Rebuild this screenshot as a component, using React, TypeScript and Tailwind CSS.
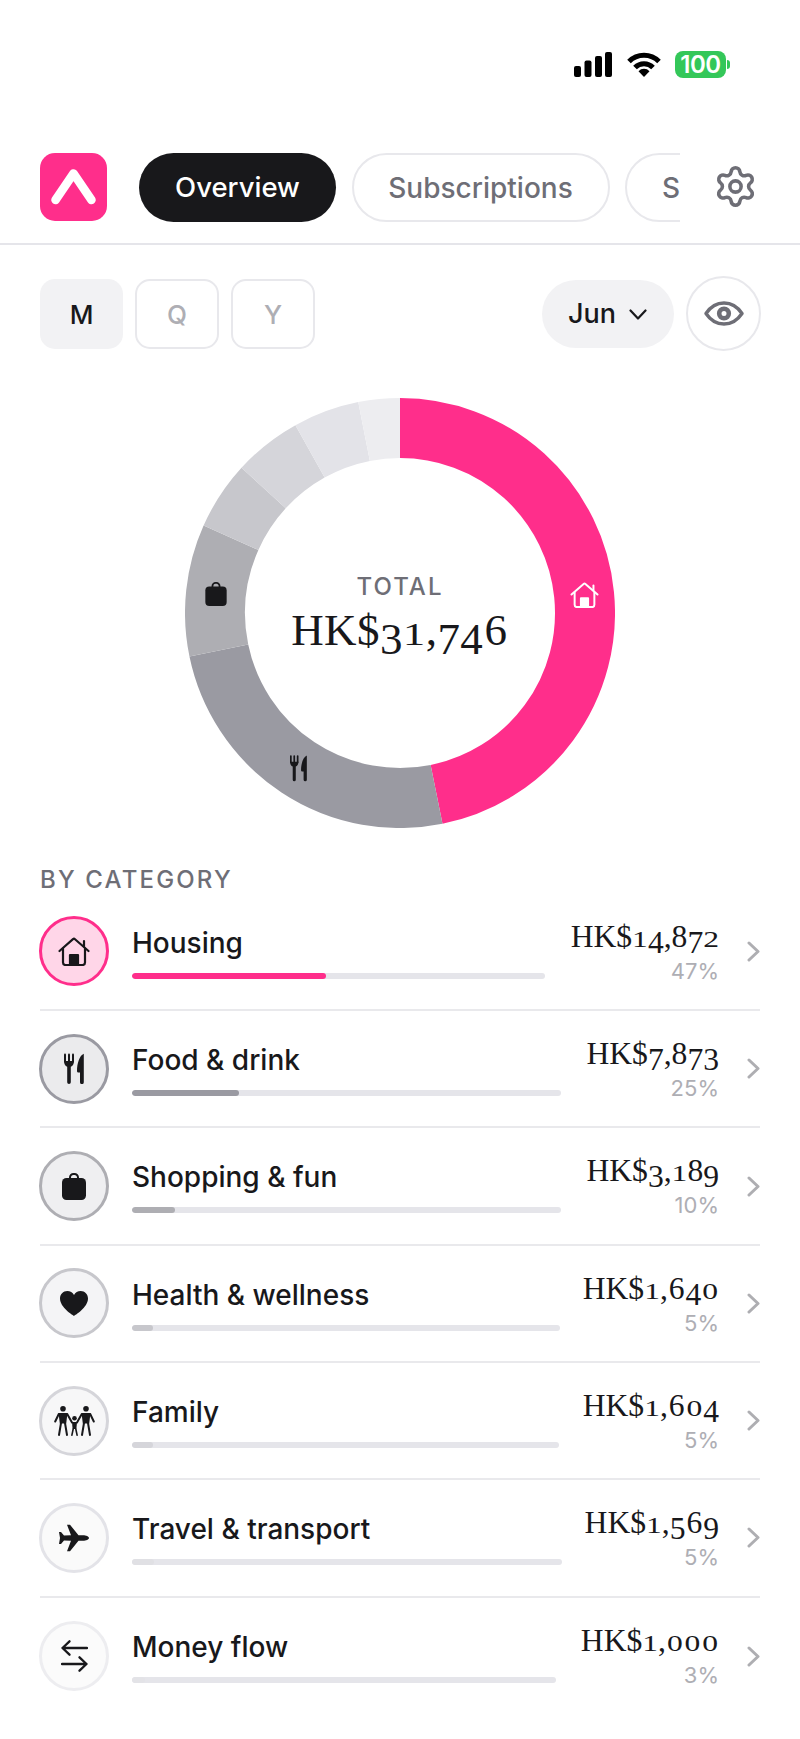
import { Settings } from 'lucide-react';
import type { ReactNode } from 'react';

const SERIF = "font-['Liberation_Serif',serif]";

// fake Georgia's old-style figures: low digits squashed, descending digits dropped
const Figures = ({ text }: { text: string }) => (
  <>
    {text.split('').map((c, i) => {
      if (c === '0') {
        return <span key={i} className="inline-block mx-[0.03em] scale-y-[0.72] origin-[50%_76%]">{c}</span>;
      }
      if ('12'.includes(c)) {
        return <span key={i} className="inline-block scale-y-[0.72] origin-[50%_76%]">{c}</span>;
      }
      if ('34579'.includes(c)) {
        return <span key={i} className="inline-block translate-y-[0.2em]">{c}</span>;
      }
      if (c === '6') {
        return <span key={i} className="mx-[0.03em]">{c}</span>;
      }
      return <span key={i}>{c}</span>;
    })}
  </>
);

const HouseIcon = ({ className }: { className: string }) => (
  <svg className={className} viewBox="0 0 32 29" fill="none" stroke="currentColor" strokeWidth="2.2" strokeLinecap="round" strokeLinejoin="round">
    <path d="M1.5 14 15 2.2a1.5 1.5 0 0 1 2 0L30.5 14" />
    <path d="M26 9.5V4" />
    <path d="M5 11.5v14a2.5 2.5 0 0 0 2.5 2.5h17a2.5 2.5 0 0 0 2.5-2.5v-14" />
    <path d="M12 28V18h8v10z" fill="currentColor" />
  </svg>
);

const ForkKnifeIcon = ({ className }: { className: string }) => (
  <svg className={className} viewBox="0 0 20 31" fill="currentColor">
    <rect x="0" y="0.5" width="2" height="9" rx="1" />
    <rect x="4" y="0.5" width="2" height="9" rx="1" />
    <rect x="8" y="0.5" width="2" height="9" rx="1" />
    <path d="M0 8h10c0 3-1.300 5-3.200 5.800V29.200a1.800 1.800 0 0 1-3.600 0V13.800C1.300 13 0 11 0 8z" />
    <path d="M19.800.8C15.500 2.500 13 10.500 13 18c0 1 .7 1.600 1.700 1.600h1.300v9.600a1.900 1.900 0 0 0 3.800 0z" />
  </svg>
);

const BagIcon = ({ className }: { className: string }) => (
  <svg className={className} viewBox="0 0 24 27" fill="currentColor">
    <path d="M8 5.500V4.500a3.500 3.500 0 0 1 3.500-3.500h1A3.500 3.500 0 0 1 16 4.500v1" fill="none" stroke="currentColor" strokeWidth="2" />
    <rect x="0" y="5" width="24" height="22" rx="4.500" />
  </svg>
);

const HeartIcon = ({ className }: { className: string }) => (
  <svg className={className} viewBox="0 0 28 25" fill="currentColor">
    <path d="M14 25C12.800 24.300 0 16.500 0 7.600 0 3.200 3.200 0 7.300 0 10.200 0 12.700 1.600 14 4 15.300 1.600 17.800 0 20.700 0 24.800 0 28 3.200 28 7.600 28 16.500 15.200 24.300 14 25z" />
  </svg>
);

const FamilyIcon = ({ className }: { className: string }) => (
  <svg className={className} viewBox="0 0 41 30" fill="currentColor" stroke="currentColor" strokeLinecap="round" strokeLinejoin="round">
    <g stroke="none">
      <circle cx="9" cy="2.800" r="2.800" />
      <circle cx="32" cy="2.800" r="2.800" />
      <circle cx="20.500" cy="12.300" r="2.300" />
      <path d="M4.500 7h9l-1.300 10.500H5.800z" />
      <path d="M27.500 7h9l-1.300 10.500h-6.400z" />
      <path d="M18 16h5l-.6 7h-3.800z" />
    </g>
    <g strokeWidth="2" fill="none">
      <path d="M4.800 8 1.200 15.500M13.200 8l4.800 8.500M7 17l-2 12M11 17l2 12" />
      <path d="M36.200 8l3.600 7.500M27.800 8 23 16.500M34 17l2 12M30 17l-2 12" />
      <path strokeWidth="1.600" d="M19.200 23l-1.300 6.200M21.800 23l1.300 6.200" />
    </g>
  </svg>
);

const PlaneIcon = ({ className }: { className: string }) => (
  <svg className={className} viewBox="0 0 30 28" fill="currentColor">
    <path d="M30 14C30 12.500 27 11.300 24 11.300L19.500 11.300 11 .8 8 .8 12 11.300 5 11.500 2 8 0 8 1 14 0 20 2 20 5 16.500 12 16.700 8 27.200 11 27.200 19.500 16.700 24 16.700C27 16.700 30 15.500 30 14Z" />
  </svg>
);

const ArrowsIcon = ({ className }: { className: string }) => (
  <svg className={className} viewBox="0 0 27 32" fill="none" stroke="currentColor" strokeWidth="2.300" strokeLinecap="round" strokeLinejoin="round">
    <path d="M26 8H1.500M8.500 1.300 1.500 8l7 6.700" />
    <path d="M1 24h24.500M18.500 17.300 25.500 24l-7 6.700" />
  </svg>
);

const LogoMark = () => (
  <svg className="w-[45px] h-[36px]" viewBox="0 0 45 36" fill="none" stroke="white" strokeWidth="8.500" strokeLinecap="round" strokeLinejoin="round">
    <path d="M4.500 31 22.500 4.500 40.500 31" />
  </svg>
);

const StatusIcons = () => (
  <div className="flex items-start">
    <svg className="w-[38px] h-[25px]" viewBox="0 0 38 25" fill="black">
      <rect x="0" y="14" width="7" height="11" rx="2" />
      <rect x="10.500" y="8.500" width="7" height="16.500" rx="2" />
      <rect x="21" y="4" width="7" height="21" rx="2" />
      <rect x="31" y="0" width="7" height="25" rx="2" />
    </svg>
    <svg className="w-[34px] h-[25px] ml-[15px]" viewBox="0 0 34 25" fill="none" stroke="black" strokeWidth="5">
      <path d="M2 9.500a21 21 0 0 1 30 0" />
      <path d="M8 15.500a12.500 12.500 0 0 1 18 0" />
      <path d="M17 25l-5.500-5.800a7.500 7.500 0 0 1 11 0z" fill="black" stroke="none" />
    </svg>
    <div className="ml-[14px] -mt-px w-[51px] h-[27px] rounded-[8px] bg-[#34c759] flex items-center justify-center text-white text-[24px] tracking-[-0.5px] font-semibold leading-none">100</div>
    <div className="w-[3px] h-[9px] ml-[1px] mt-[8px] rounded-r-full bg-[#34c759]" />
  </div>
);

// donut slices, angles read clockwise from 12 o'clock
const slices = [
  { from: 0, to: 168.6, color: '#ff2e8b' },
  { from: 168.6, to: 258.3, color: '#9a9aa2' },
  { from: 258.3, to: 294, color: '#aeaeb3' },
  { from: 294, to: 312.5, color: '#c7c7cc' },
  { from: 312.5, to: 330.9, color: '#d5d5da' },
  { from: 330.9, to: 348.8, color: '#e3e3e8' },
  { from: 348.8, to: 360, color: '#ededf0' },
];

const arc = (from: number, to: number) => {
  const R = 185;
  const pt = (a: number) => {
    const r = ((a - 90) * Math.PI) / 180;
    return `${215 + R * Math.cos(r)} ${215 + R * Math.sin(r)}`;
  };
  return `M${pt(from)}A${R} ${R} 0 ${to - from > 180 ? 1 : 0} 1 ${pt(to)}`;
};

const Donut = () => (
  <div className="relative w-[430px] h-[430px] mx-auto mt-[47px]">
    <svg className="w-full h-full" viewBox="0 0 430 430" fill="none">
      {slices.map((s) => (
        <path key={s.from} d={arc(s.from, s.to)} stroke={s.color} strokeWidth="60" />
      ))}
    </svg>
    <HouseIcon className="absolute left-[385px] top-[184px] w-[29px] h-[26px] text-white" />
    <BagIcon className="absolute left-[20px] top-[184px] w-[22px] h-[24px] text-[#18181b]" />
    <ForkKnifeIcon className="absolute left-[105px] top-[356px] w-[17px] h-[28px] text-[#18181b]" />
    <div className="absolute inset-0 flex flex-col items-center">
      <div className="mt-[176px] text-[24px] leading-[26px] font-[550] tracking-[0.085em] text-[#6e6e76]">TOTAL</div>
      <div className={`${SERIF} mt-[4px] text-[45px] leading-[52px] text-[#18181b] tracking-[0.4px]`}>
        HK$<Figures text="31,746" />
      </div>
    </div>
  </div>
);

type Row = {
  name: string;
  amount: string;
  amountW: string;
  pct: number;
  bar: string;
  circle: string;
  icon: ReactNode;
};

const ICON = 'text-[#18181b]';

const rows: Row[] = [
  { name: 'Housing', amount: '14,872', amountW: 'w-[149px]', pct: 47, bar: 'bg-[#ff2e8b]', circle: 'bg-[#ffd6e8] border-[#ff2e8b]', icon: <HouseIcon className={`w-[32px] h-[29px] ${ICON}`} /> },
  { name: 'Food & drink', amount: '7,873', amountW: 'w-[133px]', pct: 25, bar: 'bg-[#9a9aa2]', circle: 'bg-[#ebebed] border-[#9a9aa2]', icon: <ForkKnifeIcon className={`w-[20px] h-[31px] ${ICON}`} /> },
  { name: 'Shopping & fun', amount: '3,189', amountW: 'w-[133px]', pct: 10, bar: 'bg-[#aeaeb3]', circle: 'bg-[#efeff1] border-[#aeaeb3]', icon: <BagIcon className={`w-[24px] h-[27px] ${ICON}`} /> },
  { name: 'Health & wellness', amount: '1,640', amountW: 'w-[134px]', pct: 5, bar: 'bg-[#c7c7cc]', circle: 'bg-[#f4f4f6] border-[#c7c7cc]', icon: <HeartIcon className={`w-[28px] h-[25px] ${ICON}`} /> },
  { name: 'Family', amount: '1,604', amountW: 'w-[135px]', pct: 5, bar: 'bg-[#d5d5da]', circle: 'bg-[#f7f7f8] border-[#d5d5da]', icon: <FamilyIcon className={`w-[41px] h-[30px] ${ICON}`} /> },
  { name: 'Travel & transport', amount: '1,569', amountW: 'w-[132px]', pct: 5, bar: 'bg-[#e0e0e4]', circle: 'bg-[#fafafa] border-[#e3e3e8]', icon: <PlaneIcon className={`w-[30px] h-[28px] ${ICON}`} /> },
  { name: 'Money flow', amount: '1,000', amountW: 'w-[138px]', pct: 3, bar: 'bg-[#e3e3e7]', circle: 'bg-[#fbfbfb] border-[#ededf0]', icon: <ArrowsIcon className={`w-[27px] h-[32px] ${ICON}`} /> },
];

const CategoryRow = ({ row, last }: { row: Row; last: boolean }) => (
  <div className={`flex h-[117.33px] items-center ${last ? '' : 'border-b-2 border-[#e9e9ec]'}`}>
    <div className={`w-[70px] h-[70px] rounded-full border-[3px] flex items-center justify-center shrink-0 -ml-[1px] ${row.circle}`}>
      {row.icon}
    </div>
    <div className="flex-1 min-w-0 ml-[23px] self-start pt-[32px]">
      <div className="text-[28px] leading-[34px] font-medium text-[#18181b]">{row.name}</div>
      <div className="mt-[13px] h-[6px] rounded-full bg-[#e5e5ea] overflow-hidden">
        <div className={`h-full rounded-full ${row.bar}`} style={{ width: `${row.pct}%` }} />
      </div>
    </div>
    <div className={`ml-[25px] self-start pt-[25px] flex flex-col items-end shrink-0 ${row.amountW}`}>
      <div className={`${SERIF} text-[31.6px] leading-[36px] text-[#18181b] whitespace-nowrap`}>
        HK$<Figures text={row.amount} />
      </div>
      <div className="mt-[3px] text-[22px] leading-[26px] text-[#aeaeb4]">{row.pct}%</div>
    </div>
    <svg className="w-[13px] h-[21px] ml-[28px] shrink-0" viewBox="0 0 13 21" fill="none" stroke="#aeaeb2" strokeWidth="3" strokeLinecap="round" strokeLinejoin="round">
      <path d="M2 2l9 8.500-9 8.500" />
    </svg>
  </div>
);

export default function App() {
  return (
    <div className="w-[800px] h-[1739px] bg-white overflow-hidden font-['Inter',sans-serif] text-[#18181b]">
      {/* status bar */}
      <div className="h-[152px] flex justify-end pt-[52px] pr-[70px]">
        <StatusIcons />
      </div>

      {/* top nav */}
      <div className="h-[93px] border-b-2 border-[#e5e5ea] flex items-start pl-10">
        <div className="w-[67px] h-[68px] mt-[1px] rounded-[15px] bg-[#ff2e8b] flex items-center justify-center shrink-0">
          <LogoMark />
        </div>
        <div className="ml-[32px] mt-[1px] w-[541px] flex gap-[15.5px] overflow-hidden shrink-0">
          <div className="w-[197px] h-[69px] rounded-full bg-[#18181b] text-white text-[27.5px] font-medium flex items-center justify-center shrink-0">Overview</div>
          <div className="w-[258px] h-[69px] rounded-full border-2 border-[#e8e8ec] text-[#6e6e76] text-[28px] font-medium flex items-center justify-center shrink-0">Subscriptions</div>
          <div className="h-[69px] pl-[35px] pr-[36px] rounded-full border-2 border-[#e8e8ec] text-[#6e6e76] text-[28px] font-medium flex items-center shrink-0">Savings</div>
        </div>
        <Settings className="ml-[33px] mt-[12px] text-[#6e6e76] shrink-0" size={45} strokeWidth={1.9} />
      </div>

      {/* period filter */}
      <div className="mt-[31px] h-[75px] px-10 flex items-center">
        <div className="w-[83px] h-[70px] pt-[2px] rounded-[15px] bg-[#f2f2f4] text-[26px] font-medium flex items-center justify-center">M</div>
        <div className="ml-3 w-[84px] h-[70px] pt-[2px] rounded-[15px] border-2 border-[#e8e8ec] text-[26px] font-medium text-[#aeaeb4] flex items-center justify-center">Q</div>
        <div className="ml-3 w-[84px] h-[70px] pt-[2px] rounded-[15px] border-2 border-[#e8e8ec] text-[26px] font-medium text-[#aeaeb4] flex items-center justify-center">Y</div>
        <div className="ml-auto w-[132px] h-[68px] rounded-full bg-[#f2f2f4] text-[27px] font-medium flex items-center pl-[26px]">
          <span className="pt-[2px]">Jun</span>
          <svg className="w-[18px] h-[11px] ml-[13px] mt-[2px]" viewBox="0 0 18 11" fill="none" stroke="#18181b" strokeWidth="2.200" strokeLinecap="round" strokeLinejoin="round">
            <path d="M1.500 1.500 9 9.500l7.500-8" />
          </svg>
        </div>
        <div className="ml-3 w-[75px] h-[75px] -mr-px rounded-full border-2 border-[#e8e8ec] flex items-center justify-center">
          <svg className="w-[40px] h-[25px]" viewBox="0 0 40 25" fill="none" stroke="#6e6e76">
            <path d="M2 12.500C7 5 13 2 20 2s13 3 18 10.500C33 20 27 23 20 23S7 20 2 12.500z" strokeWidth="3.400" strokeLinejoin="round" />
            <circle cx="20" cy="12.500" r="4.800" strokeWidth="4.600" />
          </svg>
        </div>
      </div>

      <Donut />

      {/* by category */}
      <div className="px-10">
        <div className="mt-[39px] text-[24px] leading-[26px] font-[550] tracking-[0.09em] text-[#6e6e76]">BY CATEGORY</div>
        <div className="mt-[0.7px]">
          {rows.map((r, i) => (
            <CategoryRow key={r.name} row={r} last={i === rows.length - 1} />
          ))}
        </div>
      </div>
    </div>
  );
}
